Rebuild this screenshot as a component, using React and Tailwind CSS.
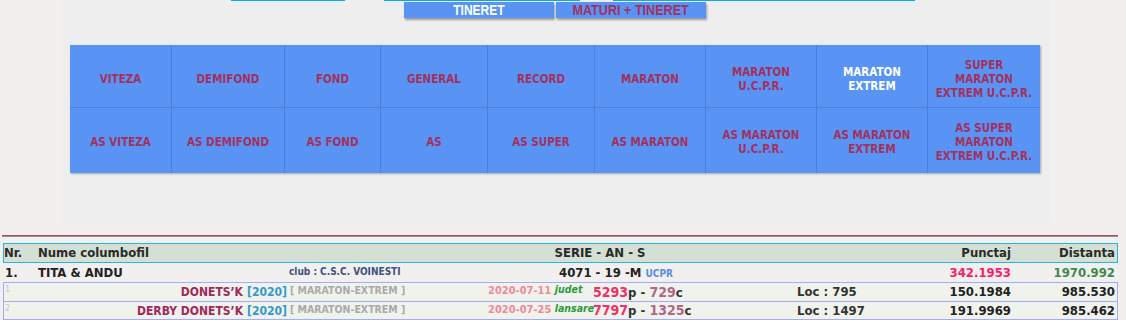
import React from "react";

const cols = [102, 113, 96, 107, 107, 111, 111, 111, 112];
const row1 = [
  ["VITEZA"],
  ["DEMIFOND"],
  ["FOND"],
  ["GENERAL"],
  ["RECORD"],
  ["MARATON"],
  ["MARATON", "U.C.P.R."],
  ["MARATON", "EXTREM"],
  ["SUPER", "MARATON", "EXTREM U.C.P.R."],
];
const row2 = [
  ["AS VITEZA"],
  ["AS DEMIFOND"],
  ["AS FOND"],
  ["AS"],
  ["AS SUPER"],
  ["AS MARATON"],
  ["AS MARATON", "U.C.P.R."],
  ["AS MARATON", "EXTREM"],
  ["AS SUPER", "MARATON", "EXTREM U.C.P.R."],
];

const F = { fontFamily: '"DejaVu Sans Condensed","DejaVu Sans",sans-serif', fontStretch: "condensed" };
const TAB = { fontFamily: '"Liberation Sans",Arial,sans-serif', fontStretch: "normal" };

function Cell({ lines, w, last, bottom, active }) {
  return (
    <div
      className={
        "flex flex-col items-center justify-center text-center text-[11.5px] leading-[14px] font-bold " +
        (last ? "" : "border-r border-[#4a80dc] ") +
        (bottom ? "h-[65px] pt-[3px] " : "h-[63px] pt-[5px] border-b border-[#4a80dc] ") +
        (active ? "text-white" : "text-[#a3315e]")
      }
      style={{ width: w }}
    >
      {lines.map((l, i) => (
        <span key={i}>{l}</span>
      ))}
    </div>
  );
}

export default function App() {
  return (
    <div className="w-[1126px] h-[320px] overflow-hidden bg-[#f2efef] text-[#222]" style={F}>
      <div className="ml-[60px] w-[990px] h-[223px] bg-[#eeeeee] relative">
        {/* cyan lines (bottom borders of tabs cut off above) */}
        <div className="absolute top-0 left-[171px] w-[114px] h-px bg-[#00aaee]" />
        <div className="absolute top-0 left-[324px] w-[196px] h-px bg-[#00aaee]" />
        <div className="absolute top-0 left-[553px] w-[302px] h-px bg-[#00aaee]" />
        <div className="flex pt-[2px] pl-[344px] gap-[2px]">
          <div className="w-[150px] h-[16px] bg-[#5993f3] text-white font-bold text-[14px] leading-[16px] flex justify-center shadow-[1px_2px_2px_rgba(0,0,0,0.35)]">
            <span className="inline-block scale-x-[0.86] whitespace-nowrap" style={TAB}>TINERET</span>
          </div>
          <div className="w-[150px] h-[16px] bg-[#5993f3] text-[#a3315e] font-bold text-[14px] leading-[16px] flex justify-center shadow-[1px_2px_2px_rgba(0,0,0,0.35)]">
            <span className="inline-block scale-x-[0.9] whitespace-nowrap" style={TAB}>MATURI + TINERET</span>
          </div>
        </div>
        <div className="mt-[27px] ml-[10px] w-[970px] bg-[#5993f3] shadow-[1px_1px_2px_rgba(0,0,0,0.3)]">
          <div className="flex">
            {row1.map((l, i) => (
              <Cell key={i} lines={l} w={cols[i]} last={i === 8} active={i === 7} />
            ))}
          </div>
          <div className="flex">
            {row2.map((l, i) => (
              <Cell key={i} lines={l} w={cols[i]} last={i === 8} bottom />
            ))}
          </div>
        </div>
      </div>

      <div className="ml-[2px] w-[1116px] mt-[12px] h-[2px] border-t border-[#a84a66] border-b border-b-[#9a8f92]" />

      <div className="ml-[3px] w-[1115px] mt-[6px]">
        {/* header */}
        <div className="flex items-center h-[20px] border border-[#2ab3e6] bg-[#d3e0d3] font-bold text-[13px] text-[#2a2a2a] whitespace-nowrap">
          <div className="w-[34px]">Nr.</div>
          <div className="w-[482px]">Nume columbofil</div>
          <div className="w-[160px] text-center">SERIE - AN - S</div>
          <div className="w-[333px] text-right pr-[2px]">Punctaj</div>
          <div className="flex-1 text-right pr-[2px]">Distanta</div>
        </div>
        {/* row 1 */}
        <div className="flex items-center h-[19px] border-x border-transparent font-bold text-[13px] text-[#222] whitespace-nowrap">
          <div className="w-[34px] pl-[1px]">1.</div>
          <div className="w-[251px]">TITA &amp; ANDU</div>
          <div className="w-[270px] text-[10px] text-[#3e5382] self-start pt-[1px]">club : C.S.C. VOINESTI</div>
          <div className="w-[300px]">
            4071 - 19 -M <span className="text-[10px] text-[#5b8ee0]">UCPR</span>
          </div>
          <div className="w-[154px] text-right pr-[2px] text-[#f5226a]">342.1953</div>
          <div className="flex-1 text-right pr-[2px] text-[#3d8a4f]">1970.992</div>
        </div>
        {/* detail rows */}
        <div className="border border-[#a4acf8] bg-[#f0f3ec]">
          {[
            { n: "1", name: "DONETS’K", date: "2020-07-11", t: "judet", p: "5293", c: "729", loc: "795", pu: "150.1984", d: "985.530" },
            { n: "2", name: "DERBY DONETS’K", date: "2020-07-25", t: "lansare", p: "7797", c: "1325", loc: "1497", pu: "191.9969", d: "985.462" },
          ].map((r, i) => (
            <div
              key={i}
              className={"flex items-center h-[18px] font-bold text-[13px] whitespace-nowrap " + (i > 0 ? "border-t border-[#a4acf8]" : "")}
            >
              <div className="w-[29px] pl-[1px] text-[9px] text-[#c8c8c8] font-normal self-start">{r.n}</div>
              <div className="w-[255px] text-right pr-[1px]">
                <span className="text-[12px] text-[#a0285a]">{r.name}</span>{" "}
                <span className="text-[12px] text-[#3399cc]">[2020]</span>
              </div>
              <div className="w-[200px] pl-[2px] text-[10.5px] text-[#aaaaaa] self-start">[ MARATON-EXTREM ]</div>
              <div className="w-[105px] text-[11px] self-start">
                <span className="text-[#f08a9a]">{r.date}</span>{" "}
                <span className="italic text-[10.5px] text-[#2a9a3a] relative -top-px">{r.t}</span>
              </div>
              <div className="w-[204px] text-[13px] text-[#333]">
                <span className="text-[14px] text-[#f0306a]">{r.p}</span>p - <span className="text-[14px] text-[#b0688a]">{r.c}</span>c
              </div>
              <div className="w-[150px] text-[#333]">Loc : {r.loc}</div>
              <div className="w-[66px] flex justify-end pr-[2px] text-[#222]">{r.pu}</div>
              <div className="flex-1 text-right pr-[2px] text-[#222]">{r.d}</div>
            </div>
          ))}
        </div>
      </div>
    </div>
  );
}
